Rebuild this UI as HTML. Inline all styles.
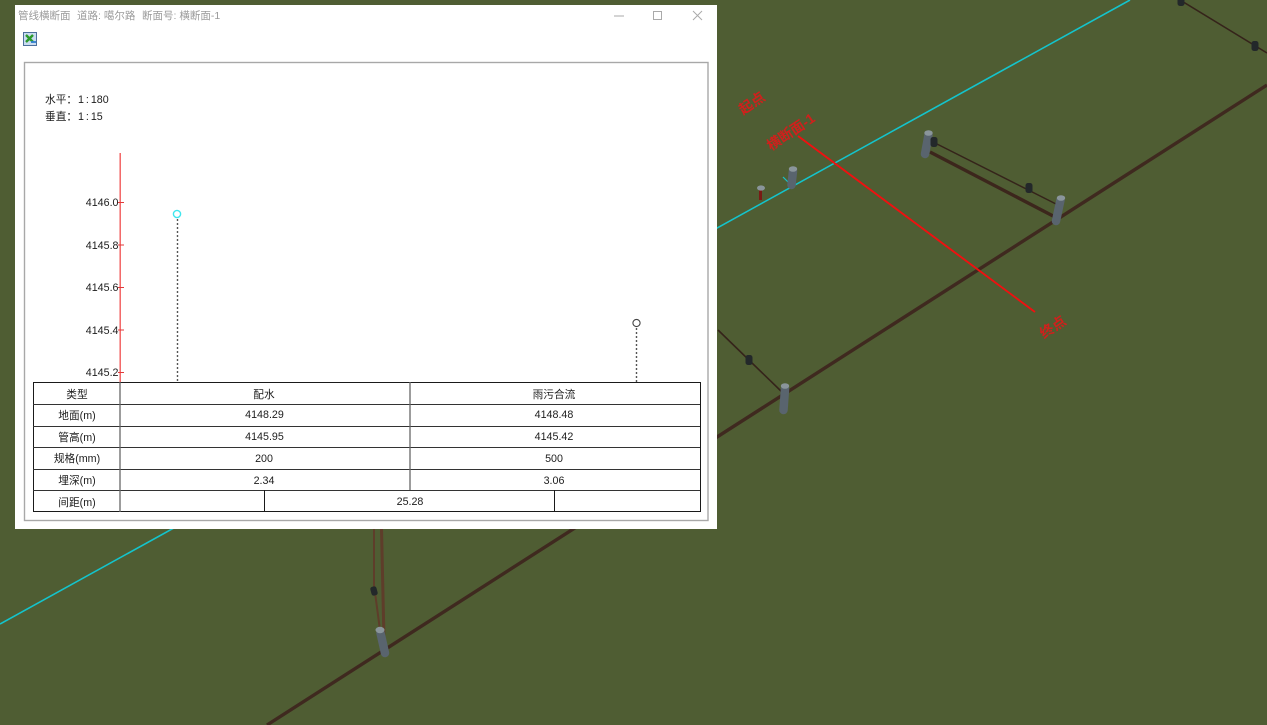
<!DOCTYPE html>
<html><head><meta charset="utf-8"><style>
html,body{margin:0;padding:0;width:1267px;height:725px;overflow:hidden;background:#4f5d33}
svg{display:block;position:absolute;left:0;top:0;filter:blur(.3px)}
text{font-family:"Liberation Sans","Noto Sans CJK SC",sans-serif;font-size:10.7px;fill:#1c1c1c}
.t{fill:#9a9a9a;font-size:10.5px}
.r{fill:#d0201c;font-size:14px;font-weight:bold}
</style></head><body>
<svg width="1267" height="725" viewBox="0 0 1267 725" xmlns="http://www.w3.org/2000/svg">
<defs><g id="box"><rect x="-3.5" y="-5" width="7" height="10" rx="2.5" fill="#23282a"/></g></defs>
<rect width="1267" height="725" fill="#4f5d33"/>
<!-- scene -->
<path d="M0 624 L1130 0" stroke="#14c4cc" stroke-width="1.6" fill="none"/>
<path d="M267 725 L1267 85" stroke="#3f291f" stroke-width="3.4" fill="none"/>
<path d="M930 152 L1055 217" stroke="#3c261c" stroke-width="3.4" fill="none"/>
<path d="M935 143 L1058 205" stroke="#35231a" stroke-width="1.5" fill="none"/>
<path d="M1180 0 L1267 53" stroke="#35231a" stroke-width="1.6" fill="none"/>
<path d="M718 330 L783 393" stroke="#35231a" stroke-width="1.6" fill="none"/>
<path d="M374 529 L374 585 L380 630" stroke="#5e3d2a" stroke-width="2" fill="none"/>
<path d="M381.500 529 L384 640" stroke="#5e3d2a" stroke-width="3" fill="none"/>
<path d="M798 136 L1035 312" stroke="#f01010" stroke-width="1.9" fill="none"/>
<path d="M783 177 L790 184" stroke="#14c4cc" stroke-width="1.2" fill="none"/>
<g stroke="#59646e" stroke-width="8.5" stroke-linecap="round" fill="none">
<path d="M928.500 135 L925 154"/>
<path d="M1060.500 200 L1056 221"/>
<path d="M793 171 L791.500 185"/>
<path d="M785 389 L783.500 410"/>
<path d="M380.500 633 L385 653"/>
</g>
<g fill="#8a959b">
<ellipse cx="928.500" cy="133" rx="4.200" ry="2.800"/>
<ellipse cx="1061" cy="198" rx="4.200" ry="2.800"/>
<ellipse cx="793" cy="169" rx="4.200" ry="2.800"/>
<ellipse cx="785" cy="386" rx="4.200" ry="2.800"/>
<ellipse cx="380" cy="630" rx="4.500" ry="3.200"/>
</g>
<path d="M759 188 h3 v12 h-3z" fill="#7a1a14"/><ellipse cx="761" cy="188" rx="4" ry="2.600" fill="#8a959b"/>
<use href="#box" transform="translate(934 142)"/><use href="#box" transform="translate(1029 188)"/>
<use href="#box" transform="translate(1255 46)"/><use href="#box" transform="translate(1181 1)"/>
<use href="#box" transform="translate(749 360)"/><use href="#box" transform="translate(374 591) rotate(-15) scale(.9)"/>
<text class="r" transform="translate(743 115) rotate(-34)">起点</text>
<text class="r" transform="translate(771 151) rotate(-34)">横断面-1</text>
<text class="r" transform="translate(1044 339) rotate(-34)">终点</text>
<!-- window -->
<rect x="15" y="5" width="702" height="524" fill="#fff"/>
<text class="t" x="18" y="19">管线横断面</text>
<text class="t" x="77" y="19">道路: 噶尔路</text>
<text class="t" x="142" y="19">断面号: 横断面-1</text>
<path d="M614 16 H624" stroke="#aaa" stroke-width="1"/>
<rect x="653.500" y="11.500" width="8" height="8" fill="none" stroke="#aaa"/>
<path d="M693 11 L702 20 M702 11 L693 20" stroke="#aaa" stroke-width="1" fill="none"/>
<!-- icon -->
<rect x="23.500" y="32.500" width="13" height="13" fill="#c9dcf0" stroke="#4d6f9c"/>
<path d="M26 35 L33 42 M33 35 L26 42" stroke="#2c9a2c" stroke-width="2.400"/>
<path d="M31 42 H36" stroke="#2f7fd0" stroke-width="1.800"/>
<!-- frame -->
<rect x="24.500" y="62.500" width="683.500" height="458" fill="#fff" stroke="#a8a8a8" stroke-width="1.400"/>
<text x="45" y="103">水平：</text><text x="78" y="103" word-spacing="-1">1 : 180</text>
<text x="45" y="120">垂直：</text><text x="78" y="120" word-spacing="-1">1 : 15</text>
<!-- chart -->
<path d="M120.200 153 V382" stroke="#f25a5a" stroke-width="1.400" fill="none"/>
<path d="M118 202.500h6M118 245h6M118 287.500h6M118 330h6M118 372.500h6" stroke="#e03a3a" fill="none"/>
<g text-anchor="end"><text x="118.500" y="206">4146.0</text><text x="118.500" y="249">4145.8</text><text x="118.500" y="291">4145.6</text><text x="118.500" y="334">4145.4</text><text x="118.500" y="376">4145.2</text></g>
<circle cx="177" cy="214" r="3.600" fill="#fff" stroke="#3fe6ee" stroke-width="1.400"/>
<circle cx="636.500" cy="323" r="3.600" fill="#fff" stroke="#444" stroke-width="1.100"/>
<path d="M177.500 219 V382 M636.500 328 V382" stroke="#555" stroke-width="1.400" stroke-dasharray="2 2" fill="none"/>
<!-- table -->
<rect x="33" y="382" width="667" height="130" fill="#fff"/>
<g stroke="#1a1a1a" fill="none">
<rect x="33.500" y="382.500" width="667" height="129"/>
<path d="M33 404.500H700M33 426.500H700M33 447.500H700M33 469.500H700M33 490.500H700" stroke="#333"/>
<path d="M120 382V512" stroke="#666" stroke-width="1.300"/>
<path d="M410 382V490" stroke="#666" stroke-width="1.300"/>
<path d="M264.500 490V512M554.500 490V512"/>
</g>
<g text-anchor="middle">
<text x="77" y="398">类型</text><text x="264" y="398">配水</text><text x="554" y="398">雨污合流</text>
<text x="77" y="419">地面(m)</text><text x="264.500" y="418">4148.29</text><text x="554" y="418">4148.48</text>
<text x="77" y="441">管高(m)</text><text x="264.500" y="440">4145.95</text><text x="554" y="440">4145.42</text>
<text x="77" y="462">规格(mm)</text><text x="264" y="462">200</text><text x="554" y="462">500</text>
<text x="77" y="484">埋深(m)</text><text x="264" y="484">2.34</text><text x="554" y="484">3.06</text>
<text x="77" y="506">间距(m)</text><text x="410" y="505">25.28</text>
</g>
</svg>
</body></html>
